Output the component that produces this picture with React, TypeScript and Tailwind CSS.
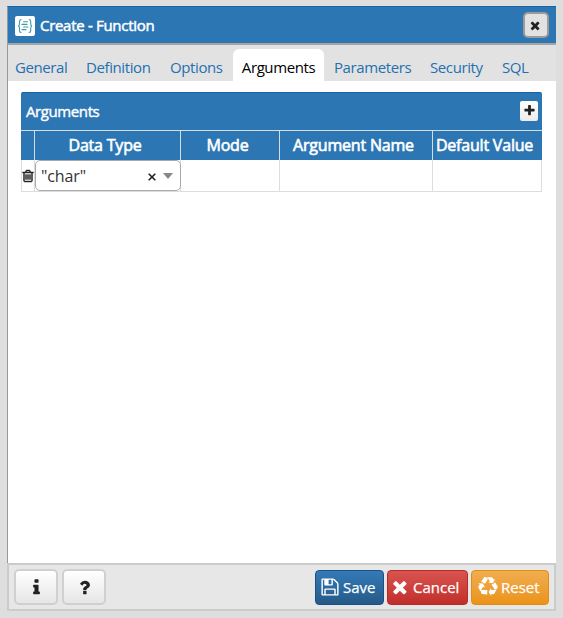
import type { ReactNode } from "react";

const ICONS = {
  times:
    "M1298 1322q0 40-28 68l-136 136q-28 28-68 28t-68-28l-294-294-294 294q-28 28-68 28t-68-28l-136-136q-28-28-28-68t28-68l294-294-294-294q-28-28-28-68t28-68l136-136q28-28 68-28t68 28l294 294 294-294q28-28 68-28t68 28l136 136q28 28 28 68t-28 68l-294 294 294 294q28 28 28 68z",
  plus:
    "M1600 736v192q0 40-28 68t-68 28h-416v416q0 40-28 68t-68 28h-192q-40 0-68-28t-28-68v-416h-416q-40 0-68-28t-28-68v-192q0-40 28-68t68-28h416v-416q0-40 28-68t68-28h192q40 0 68 28t28 68v416h416q40 0 68 28t28 68z",
  info:
    "M1216 1344v128q0 26-19 45t-45 19h-512q-26 0-45-19t-19-45v-128q0-26 19-45t45-19h64v-384h-64q-26 0-45-19t-19-45v-128q0-26 19-45t45-19h384q26 0 45 19t19 45v576h64q26 0 45 19t19 45zm-128-1152v192q0 26-19 45t-45 19h-256q-26 0-45-19t-19-45v-192q0-26 19-45t45-19h256q26 0 45 19t19 45z",
  question:
    "M1088 1256v240q0 16-12 28t-28 12h-240q-16 0-28-12t-12-28v-240q0-16 12-28t28-12h240q16 0 28 12t12 28zm316-600q0 54-15.5 101t-35 76.500-55 59.500-57.500 43.500-61 35.500q-41 23-68.500 65t-27.500 67q0 17-12 32.500t-28 15.500h-240q-15 0-25.500-18.500t-10.500-37.500v-45q0-83 65-156.500t143-108.500q59-27 84-56t25-76q0-42-46.500-74t-107.500-32q-65 0-108 29-35 25-107 115-13 16-31 16-12 0-25-8l-164-125q-13-10-15.500-25t5.500-28q160-266 464-266 80 0 161 31t146 83 106 127.500 41 158.500z",
  trash:
    "M704 736v576q0 14-9 23t-23 9h-64q-14 0-23-9t-9-23v-576q0-14 9-23t23-9h64q14 0 23 9t9 23zm256 0v576q0 14-9 23t-23 9h-64q-14 0-23-9t-9-23v-576q0-14 9-23t23-9h64q14 0 23 9t9 23zm256 0v576q0 14-9 23t-23 9h-64q-14 0-23-9t-9-23v-576q0-14 9-23t23-9h64q14 0 23 9t9 23zm128 724v-948h-896v948q0 22 7 40.500t14.500 27 10.500 8.500h832q3 0 10.500-8.500t14.500-27 7-40.500zm-672-1076h448l-48-117q-7-9-17-11h-317q-10 2-17 11zm928 32v64q0 14-9 23t-23 9h-96v948q0 83-47 143.500t-113 60.500h-832q-66 0-113-58.500t-47-141.500v-952h-96q-14 0-23-9t-9-23v-64q0-14 9-23t23-9h309l70-167q15-37 54-63t79-26h320q40 0 79 26t54 63l70 167h309q14 0 23 9t9 23z",
  floppy:
    "M512 1536h768v-384h-768v384zm896 0h128v-896q0-14-10-38.500t-20-34.500l-281-281q-10-10-34-20t-39-10v416q0 40-28 68t-68 28h-576q-40 0-68-28t-28-68v-416h-128v1280h128v-416q0-40 28-68t68-28h832q40 0 68 28t28 68v416zm-384-928v-320q0-13-9.500-22.500t-22.500-9.500h-192q-13 0-22.500 9.500t-9.500 22.500v320q0 13 9.500 22.500t22.500 9.500h192q13 0 22.500-9.500t9.500-22.500zm640 32v928q0 40-28 68t-68 28h-1344q-40 0-68-28t-28-68v-1344q0-40 28-68t68-28h928q40 0 88 20t76 48l280 280q28 28 48 76t20 88z",
  recycle:
    "M836 1169l-15 368-2 22-420-29q-36-3-67-31.500t-47-65.500q-11-27-14.500-55t4-65 12-55 21.500-64 19-53q78 12 509 28zm-387-586l180 379-147-92q-63 72-111.500 144.500t-72.500 125-39.500 94.500-18.500 63l-4 21-190-357q-17-26-18-56t6-47l8-18q35-63 114-188l-140-86zm1231 517l-188 359q-12 29-36.500 46.500t-43.500 20.500l-18 4q-71 7-219 12l8 164-230-367 211-362 7 173q170 16 283 5t170-33zm-785-924q-47 63-265 435l-317-187-19-12 225-356q20-31 60-45t80-10q24 2 48.500 12t42 21 41.500 33 36 34.500 36 39.500 32 35zm655 307l212 363q18 37 12.500 76t-27.500 74q-13 20-33 37t-38 28-48.500 22-47 16-51.500 14-46 12q-34-72-265-436l313-195zm-143-226l142-83-220 373-419-20 151-86q-34-89-75-166t-75.500-123.500-64.500-80-47-46.500l-17-13 405 1q31-3 58 10.500t39 28.500l11 15q39 61 112 190z",
};

function Icon({ name, className }: { name: keyof typeof ICONS; className: string }) {
  return (
    <svg viewBox="0 0 1792 1792" fill="currentColor" className={`shrink-0 ${className}`}>
      <path d={ICONS[name]} />
    </svg>
  );
}

function FunctionIcon() {
  return (
    <svg
      viewBox="0 0 20 20"
      className="mt-[2px] size-5 shrink-0"
      fill="none"
      stroke="#3d9aa8"
      strokeWidth="1.100"
      strokeLinecap="round"
    >
      <rect width="20" height="20" rx="2" fill="#fff" stroke="none" />
      <path d="M6 3.600C4.600 3.600 4.500 4.400 4.500 5.600v2.200c0 1.300-.4 2.100-1.400 2.200 1 .1 1.400.9 1.400 2.200v2.200c0 1.200.1 2 1.500 2M14.200 3.600c1.400 0 1.500.8 1.500 2v2.200c0 1.300.4 2.100 1.400 2.200-1 .1-1.400.9-1.400 2.200v2.200c0 1.200-.1 2-1.500 2" />
      <path d="M8.600 5.800h4M7 8.400h5M8.600 11h4.400M7 13.600h4" />
    </svg>
  );
}

const tabs = [
  { label: "General", box: "w-[71px]" },
  { label: "Definition", box: "w-[84px]" },
  { label: "Options", box: "w-[63px]" },
  { label: "Arguments", box: "w-[91px]" },
  { label: "Parameters", box: "w-[96px]" },
  { label: "Security", box: "w-[72px]" },
  { label: "SQL", box: "w-[27px]" },
];

function ActionButton({ children, className }: { children: ReactNode; className: string }) {
  return (
    <button
      className={`flex h-[35px] items-center rounded-[4px] border text-[15px] whitespace-nowrap text-white [-webkit-text-stroke:0.25px_white] ${className}`}
    >
      {children}
    </button>
  );
}

function HelpButton({ name }: { name: "info" | "question" }) {
  return (
    <button className="flex h-[36px] w-[44px] items-center justify-center rounded-[5px] border-2 border-[#d0d0d0] bg-linear-to-b from-white to-[#e6e6e6] text-[#222]">
      <Icon name={name} className="size-[19px]" />
    </button>
  );
}

export default function App() {
  return (
    <div className="h-[618px] w-[563px] bg-[#dedede] pt-[6px] pl-[7px] font-['Open_Sans',sans-serif] text-[#222]">
      <div className="flex h-[605px] w-[549px] flex-col">
        <header className="flex h-[39px] shrink-0 items-center border-t border-b-2 border-l border-t-[#1763a5] border-b-[#a5a5a5] border-l-[#999] bg-[#2c76b4] pr-[7px] pl-[7px] text-white">
          <FunctionIcon />
          <h1 className="mt-px ml-[5px] text-[15px] tracking-[-0.3px] [-webkit-text-stroke:0.5px_white]">
            Create - Function
          </h1>
          <button className="ml-auto flex size-[26px] items-center justify-center rounded-[5px] border-2 border-[#9b9b9b] bg-[#e2e2e2] text-[#222]">
            <Icon name="times" className="size-[13px]" />
          </button>
        </header>

        <main className="flex h-[518px] shrink-0 flex-col border-l border-[#999] bg-white">
          <nav className="flex h-[36px] shrink-0 items-end bg-[#e2e2e2] pl-[7px] text-[15px] tracking-[-0.4px] text-[#2371b1]">
            {tabs.map((tab) =>
              tab.label === "Arguments" ? (
                <a
                  key={tab.label}
                  className={`flex h-[32px] ${tab.box} items-center justify-center rounded-t-[6px] bg-white pt-[5px] text-black`}
                >
                  {tab.label}
                </a>
              ) : (
                <a
                  key={tab.label}
                  className={`flex h-[32px] ${tab.box} items-center pt-[5px] ${tab.label === "Parameters" ? "ml-[10px]" : ""}`}
                >
                  {tab.label}
                </a>
              ),
            )}
          </nav>

          <section className="mt-[11px] ml-[13px] w-[521px]">
            <div className="flex h-[38px] items-center justify-between rounded-t-[2px] border-t border-[#1763a5] bg-[#2c76b4] pr-[4px] pl-[5px] text-white">
              <h2 className="text-[15px] tracking-[-0.4px] [-webkit-text-stroke:0.4px_white]">Arguments</h2>
              <button className="mb-[2px] flex h-[20px] w-[18px] items-center justify-center rounded-[2px] bg-linear-to-b from-white to-[#ececec] text-[#222]">
                <Icon name="plus" className="size-[13px]" />
              </button>
            </div>
            <table className="w-[521px] table-fixed border-separate border-spacing-0">
              <colgroup>
                <col className="w-[14px]" />
                <col className="w-[146px]" />
                <col className="w-[99px]" />
                <col className="w-[153px]" />
                <col className="w-[109px]" />
              </colgroup>
              <thead>
                <tr className="h-[30px] bg-[#2c76b4] text-[16px] leading-[24px] tracking-[-0.2px] whitespace-nowrap text-white [-webkit-text-stroke:0.6px_white]">
                  <th className="border-t border-r border-[#d3dde6] p-0" />
                  <th className="border-t border-r border-[#d3dde6] p-0 pr-[5px] pb-[2px] font-normal">Data Type</th>
                  <th className="border-t border-r border-[#d3dde6] p-0 pr-[5px] pb-[2px] font-normal">Mode</th>
                  <th className="border-t border-r border-[#d3dde6] p-0 pr-[5px] pb-[2px] font-normal">Argument Name</th>
                  <th className="border-t border-[#d3dde6] p-0 pr-[6px] pb-[2px] font-normal">Default Value</th>
                </tr>
              </thead>
              <tbody>
                <tr className="h-[32px]">
                  <td className="border-r border-b border-l border-[#ddd] p-0">
                    <Icon name="trash" className="-ml-[1.5px] size-[14px] max-w-none stroke-[#222] stroke-[60px]" />
                  </td>
                  <td className="border-r border-b border-[#ddd] p-0">
                    <div className="flex h-[31px] w-[146px] items-center rounded-[5px] border border-[#aaa] bg-white pl-[5px] text-[16px] tracking-[-0.1px] text-[#333]">
                      <span className="flex-1 pt-px">"char"</span>
                      <svg viewBox="0 0 8 8" className="mt-[2px] mr-px size-[8px]" stroke="#222" strokeWidth="1.600">
                        <path d="M.7.7l6.600 6.600M7.300.7L.7 7.300" />
                      </svg>
                      <svg viewBox="0 0 10 6" className="mr-[7px] ml-[6px] h-[6px] w-[10px]" fill="#888">
                        <path d="M0 0h10L5 6z" />
                      </svg>
                    </div>
                  </td>
                  <td className="border-r border-b border-[#ddd] p-0" />
                  <td className="border-r border-b border-[#ddd] p-0" />
                  <td className="border-r border-b border-[#ddd] p-0" />
                </tr>
              </tbody>
            </table>
          </section>
        </main>

        <footer className="flex h-[48px] shrink-0 items-center border-2 border-[#cbcbcb] bg-[#e7e7e7] pr-[5px] pl-[5px]">
          <div className="flex gap-[4px]">
            <HelpButton name="info" />
            <HelpButton name="question" />
          </div>
          <div className="ml-auto flex gap-[3px]">
            <ActionButton className="w-[69px] border-[#1b5084] bg-linear-to-b from-[#337ab7] to-[#265a88] pl-[4px]">
              <Icon name="floppy" className="mr-[3px] size-[20px]" />
              Save
            </ActionButton>
            <ActionButton className="w-[81px] border-[#b52b27] bg-linear-to-b from-[#d9534f] to-[#c12e2a] pl-[4px]">
              <Icon name="times" className="mr-px size-[20px]" />
              Cancel
            </ActionButton>
            <ActionButton className="w-[78px] border-[#e38d13] bg-linear-to-b from-[#f0ad4e] to-[#eb9316] pl-[6px]">
              <Icon name="recycle" className="mr-[3px] size-[20px]" />
              Reset
            </ActionButton>
          </div>
        </footer>
      </div>
    </div>
  );
}
